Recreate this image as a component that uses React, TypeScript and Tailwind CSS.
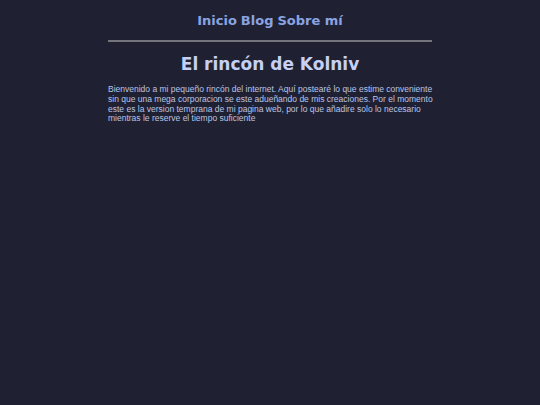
export default function App() {
  return (
    <div className="min-h-[405px] bg-[#1f2133] pt-[12px]">
      <div className="mx-auto w-[324px]">
        <nav className="flex justify-center gap-[4px] text-[13px] font-bold text-[#8aa4e2] [font-family:'DejaVu_Sans',sans-serif] leading-[18px]">
          <a href="#">Inicio</a>
          <a href="#">Blog</a>
          <a href="#">Sobre mí</a>
        </nav>
        <hr className="mt-[10px] border-t-2 border-[#74747c]" />
        <h1 className="mt-[10px] text-center text-[17px] font-bold text-[#c6d0f5] [font-family:'DejaVu_Sans',sans-serif] leading-[24px]">
          El rincón de Kolniv
        </h1>
        <p className="mt-[9px] w-[332px] text-[8.5px] leading-[9.75px] text-[#bcc4e4] [font-family:'Liberation_Sans',Arial,sans-serif]">
          Bienvenido a mi pequeño rincón del internet. Aquí postearé lo que estime conveniente sin que una mega corporacion se este adueñando de mis creaciones. Por el momento este es la version temprana de mi pagina web, por lo que añadire solo lo necesario mientras le reserve el tiempo suficiente
        </p>
      </div>
    </div>
  );
}
